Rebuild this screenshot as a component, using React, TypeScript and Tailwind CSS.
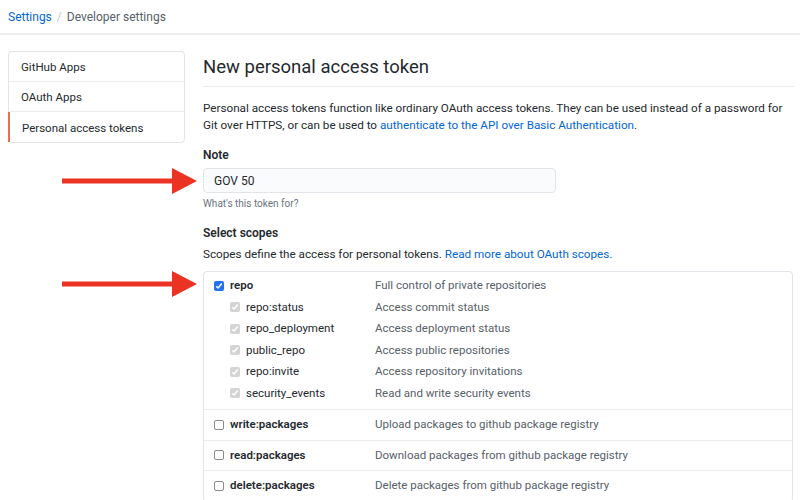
import React from "react";

const font = "[font-family:Roboto,'Noto_Sans',sans-serif]";

function Check({ state }: { state: "on" | "off" | "dim" }) {
  if (state === "off") {
    return (
      <span className="inline-block w-[10px] h-[10px] rounded-[2px] border border-[#8a8a8a] bg-white shrink-0" />
    );
  }
  return (
    <span
      className={
        "inline-flex items-center justify-center w-[10px] h-[10px] rounded-[2px] shrink-0 " +
        (state === "on" ? "bg-[#1f73f0]" : "bg-[#d4d4d4]")
      }
    >
      <svg width="8" height="8" viewBox="0 0 8 8">
        <path d="M1.2 4.2 L3.1 6 L6.8 1.6" fill="none" stroke="white" strokeWidth="1.5" />
      </svg>
    </span>
  );
}

function Arrow({ top }: { top: number }) {
  return (
    <svg
      className="absolute left-[60px]"
      style={{ top }}
      width="140"
      height="28"
      viewBox="0 0 140 28"
    >
      <rect x="2" y="11.5" width="112" height="5" fill="#ea3323" />
      <polygon points="112,1 137,14 112,27" fill="#ea3323" />
    </svg>
  );
}

const subs = [
  ["repo:status", "Access commit status"],
  ["repo_deployment", "Access deployment status"],
  ["public_repo", "Access public repositories"],
  ["repo:invite", "Access repository invitations"],
  ["security_events", "Read and write security events"],
];

const others = [
  ["write:packages", "Upload packages to github package registry"],
  ["read:packages", "Download packages from github package registry"],
  ["delete:packages", "Delete packages from github package registry"],
];

export default function App() {
  return (
    <div className={"relative w-[800px] h-[500px] overflow-hidden bg-white text-[#24292e] " + font}>
      <div className="h-[35px] border-b-2 border-[#eceef1] flex items-center px-2 text-[12px]">
        <span className="text-[#0366d6]">Settings</span>
        <span className="mx-[5px] text-[#c4c8cc]">/</span>
        <span className="text-[#586069]">Developer settings</span>
      </div>

      <div className="flex">
        <div className="ml-2 mt-4 w-[177px] h-[92px] border border-[#e1e4e8] rounded-[4px] text-[11.5px] flex flex-col">
          <div className="h-[30px] pt-[3px] flex items-center pl-3 border-b border-[#eaecef]">GitHub Apps</div>
          <div className="h-[30px] pt-[3px] flex items-center pl-3 border-b border-[#eaecef]">OAuth Apps</div>
          <div className="h-[30px] pt-[3px] flex items-center pl-3 border-l-2 border-[#ec6a5c] -ml-px">
            Personal access tokens
          </div>
        </div>

        <div className="ml-[18px] mt-4 w-[591px]">
          <div className="h-[36px] pb-[2px] flex items-center border-b border-[#eaecef] text-[18.5px]">
            New personal access token
          </div>
          <p className="mt-[13px] text-[11.7px] leading-[17px]">
            <span className="whitespace-nowrap">
              Personal access tokens function like ordinary OAuth access tokens. They can be used instead of a password for
            </span>
            <br />
            Git over HTTPS, or can be used to{" "}
            <span className="text-[#0366d6]">authenticate to the API over Basic Authentication</span>.
          </p>

          <div className="mt-[14px] text-[12px] font-semibold leading-[14px]">Note</div>
          <div className="mt-[6px] w-[353px] h-[25px] rounded-[4px] border border-[#e1e4e8] bg-[#fafbfc] flex items-center pl-[10px] text-[12px]">
            GOV 50
          </div>
          <div className="mt-[4px] text-[10px] text-[#6a737d] leading-[13px]">What's this token for?</div>

          <div className="mt-[16px] text-[12px] font-semibold leading-[14px]">Select scopes</div>
          <div className="mt-[7px] text-[11.7px] leading-[14px]">
            Scopes define the access for personal tokens.{" "}
            <span className="text-[#0366d6]">Read more about OAuth scopes.</span>
          </div>

          <div className="mt-[10px] w-[590px] border border-[#e1e4e8] rounded-[4px] text-[11.5px]">
            <div className="pt-[3px] pb-[5px] border-b border-[#eaecef]">
              <div className="h-[21.5px] flex items-center">
                <div className="w-[171px] flex items-center pl-[10px] gap-[6px]">
                  <Check state="on" />
                  <span className="font-semibold">repo</span>
                </div>
                <span className="text-[#586069]">Full control of private repositories</span>
              </div>
              {subs.map(([k, d]) => (
                <div key={k} className="h-[21.5px] flex items-center">
                  <div className="w-[171px] flex items-center pl-[26px] gap-[6px]">
                    <Check state="dim" />
                    <span>{k}</span>
                  </div>
                  <span className="text-[#586069]">{d}</span>
                </div>
              ))}
            </div>
            {others.map(([k, d]) => (
              <div key={k} className="h-[30.5px] flex items-center border-b border-[#eaecef]">
                <div className="w-[171px] flex items-center pl-[10px] gap-[6px]">
                  <Check state="off" />
                  <span className="font-semibold">{k}</span>
                </div>
                <span className="text-[#586069]">{d}</span>
              </div>
            ))}
          </div>
        </div>
      </div>

      <Arrow top={167} />
      <Arrow top={270} />
    </div>
  );
}
